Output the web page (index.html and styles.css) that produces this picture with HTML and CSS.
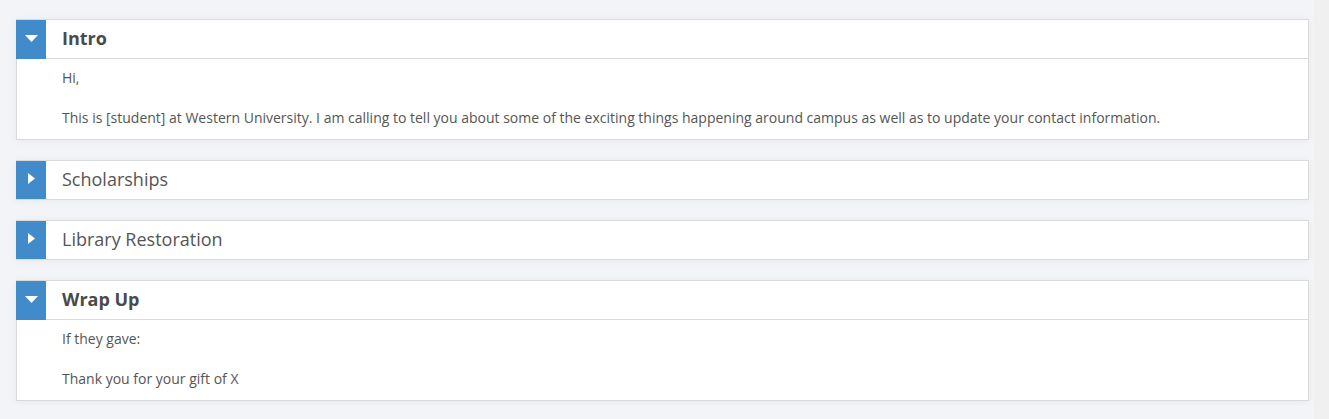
FILE: index.html
```html
<!DOCTYPE html>
<html>
<head>
<meta charset="utf-8">
<link rel="stylesheet" href="styles.css">
</head>
<body>
<div class="page">
  <main class="main">
    <section class="card open">
      <div class="card-head">
        <div class="toggle"><svg class="icon-down" width="13" height="7" viewBox="0 0 13 7"><polygon points="0,0 13,0 6.5,7" fill="#fff"/></svg></div>
        <h2 class="title bold">Intro</h2>
      </div>
      <div class="card-body">
        <p>Hi,</p>
        <p>This is [student] at Western University. I am calling to tell you about some of the exciting things happening around campus as well as to update your contact information.</p>
      </div>
    </section>
    <section class="card">
      <div class="card-head">
        <div class="toggle"><svg class="icon-right" width="7" height="11" viewBox="0 0 7 11"><polygon points="0,0 7,5.5 0,11" fill="#fff"/></svg></div>
        <h2 class="title">Scholarships</h2>
      </div>
    </section>
    <section class="card">
      <div class="card-head">
        <div class="toggle"><svg class="icon-right" width="7" height="11" viewBox="0 0 7 11"><polygon points="0,0 7,5.5 0,11" fill="#fff"/></svg></div>
        <h2 class="title">Library Restoration</h2>
      </div>
    </section>
    <section class="card open">
      <div class="card-head">
        <div class="toggle"><svg class="icon-down" width="13" height="7" viewBox="0 0 13 7"><polygon points="0,0 13,0 6.5,7" fill="#fff"/></svg></div>
        <h2 class="title bold">Wrap Up</h2>
      </div>
      <div class="card-body">
        <p>If they gave:</p>
        <p>Thank you for your gift of X</p>
      </div>
    </section>
  </main>
  <div class="scroll-strip"></div>
</div>
</body>
</html>
```
FILE: styles.css
```css
html, body {
  margin: 0;
  padding: 0;
  height: 100%;
}
body {
  font-family: "Open Sans", "Liberation Sans", sans-serif;
  color: #555;
  background: #f3f4f8;
}
.page {
  display: flex;
  min-height: 100%;
}
.main {
  flex: 1;
  padding: 19px 5px 0 16px;
  display: flex;
  flex-direction: column;
  gap: 20px;
}
.scroll-strip {
  width: 15px;
  background: #f0f0f0;
}
.card {
  background: #fff;
  border: 1px solid #dadada;
  box-shadow: 0 1px 8px rgba(0, 0, 0, 0.05);
}
.card-head {
  display: flex;
  align-items: center;
  height: 38px;
  margin: -1px 0 0 -1px;
  border-top: 1px solid transparent;
}
.card.open .card-head {
  border-bottom: 1px solid #dadada;
}
.toggle {
  width: 30px;
  align-self: stretch;
  margin-bottom: -1px;
  background: #428bca;
  display: flex;
  align-items: center;
  justify-content: center;
  padding-bottom: 3px;
  box-sizing: border-box;
}
.card:not(.open) .toggle {
  margin-bottom: 0;
}
.icon-right {
  margin-left: 1px;
}
.title {
  margin: 0 0 0 16px;
  padding-bottom: 3px;
  font-size: 18px;
  font-weight: 400;
  color: #555;
  line-height: 24px;
}
.title.bold {
  font-weight: 700;
  color: #4a4a4a;
}
.card-body {
  padding: 9px 16px 11px 45px;
  font-size: 14px;
  line-height: 20px;
}
.card-body p {
  margin: 0 0 20px;
}
.card-body p:last-child {
  margin-bottom: 0;
}
```
